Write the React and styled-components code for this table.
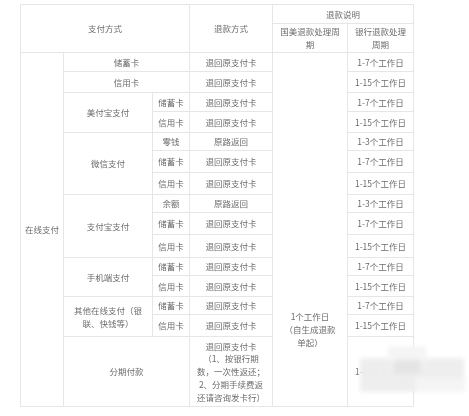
import React from "react";
import styled, { createGlobalStyle } from "styled-components";

const GlobalStyle = createGlobalStyle`
  html, body {
    margin: 0;
    background: #fff;
  }
  body {
    font-family: "Noto Sans CJK SC", "Noto Sans", sans-serif;
  }
`;

const Page = styled.div`
  position: relative;
  width: 469px;
  height: 416px;
  padding: 4px 0 0 20px;
  box-sizing: border-box;
  overflow: hidden;
`;

const Table = styled.table`
  border-collapse: collapse;
  table-layout: fixed;
  width: 393px;
  color: #6c6c6c;
  font-size: 8.5px;
  line-height: 12.8px;
  filter: blur(0.3px);
`;

const Row = styled.tr`
  height: ${(p) => p.$h}px;
`;

const Th = styled.th`
  font-weight: normal;
  border: 1px solid #e6e6e6;
  padding: 0 3px;
  text-align: center;
  vertical-align: middle;
  white-space: nowrap;
`;

const Td = styled.td`
  border: 1px solid #e6e6e6;
  padding: ${(p) => (p.$top ? `${p.$top}px 3px 0` : "0 3px")};
  text-align: center;
  vertical-align: ${(p) => (p.$top ? "top" : "middle")};
  white-space: nowrap;
`;

const Watermark = styled.div`
  position: absolute;
  left: 356px;
  top: 338px;
  width: 113px;
  height: 64px;
  filter: blur(2px);
  pointer-events: none;
`;

const Patch = styled.div`
  position: absolute;
  left: ${(p) => p.$x}px;
  top: ${(p) => p.$y}px;
  width: ${(p) => p.$w}px;
  height: ${(p) => p.$h}px;
  background: ${(p) => p.$c};
`;

const debit = "储蓄卡";
const credit = "信用卡";
const back = "退回原支付卡";
const d7 = "1-7个工作日";
const d15 = "1-15个工作日";
const d3 = "1-3个工作日";

const groups = [
  { name: "美付宝支付", rows: [[debit, back, d7, 19], [credit, back, d15, 21]] },
  {
    name: "微信支付",
    rows: [["零钱", "原路返回", d3, 18], [debit, back, d7, 22], [credit, back, d15, 22]],
  },
  {
    name: "支付宝支付",
    rows: [["余额", "原路返回", d3, 18], [debit, back, d7, 22], [credit, back, d15, 23]],
  },
  { name: "手机端支付", rows: [[debit, back, d7, 18], [credit, back, d15, 21]] },
  {
    name: (
      <>
        其他在线支付（银
        <br />
        联、快钱等）
      </>
    ),
    rows: [[debit, back, d7, 18], [credit, back, d15, 22]],
  },
];

export default function App() {
  return (
    <Page>
      <GlobalStyle />
      <Table>
        <colgroup>
          <col style={{ width: 43 }} />
          <col style={{ width: 89 }} />
          <col style={{ width: 37 }} />
          <col style={{ width: 83 }} />
          <col style={{ width: 75 }} />
          <col style={{ width: 66 }} />
        </colgroup>
        <thead>
          <Row $h={19}>
            <Th colSpan={3} rowSpan={2}>支付方式</Th>
            <Th rowSpan={2}>退款方式</Th>
            <Th colSpan={2}>退款说明</Th>
          </Row>
          <Row $h={29}>
            <Th>
              国美退款处理周
              <br />期
            </Th>
            <Th>
              银行退款处理
              <br />周期
            </Th>
          </Row>
        </thead>
        <tbody>
          <Row $h={19}>
            <Td rowSpan={15}>在线支付</Td>
            <Td colSpan={2}>{debit}</Td>
            <Td>{back}</Td>
            <Td rowSpan={15} $top={257}>
              1个工作日
              <br />
              （自生成退款
              <br />
              单起）
            </Td>
            <Td>{d7}</Td>
          </Row>
          <Row $h={21}>
            <Td colSpan={2}>{credit}</Td>
            <Td>{back}</Td>
            <Td>{d15}</Td>
          </Row>
          {groups.map((g, gi) =>
            g.rows.map(([card, way, days, h], ri) => (
              <Row $h={h} key={`${gi}-${ri}`}>
                {ri === 0 && <Td rowSpan={g.rows.length}>{g.name}</Td>}
                <Td>{card}</Td>
                <Td>{way}</Td>
                <Td>{days}</Td>
              </Row>
            ))
          )}
          <Row $h={70}>
            <Td colSpan={2}>分期付款</Td>
            <Td>
              退回原支付卡
              <br />
              （1、按银行期
              <br />
              数，一次性返还；
              <br />
              2、分期手续费返
              <br />
              还请咨询发卡行）
            </Td>
            <Td>{d15}</Td>
          </Row>
        </tbody>
      </Table>
      <Watermark>
        <Patch $x={4} $y={20} $w={104} $h={34} $c="rgba(238,238,238,0.98)" />
        <Patch $x={32} $y={8} $w={38} $h={16} $c="rgba(244,244,244,0.95)" />
        <Patch $x={38} $y={22} $w={26} $h={14} $c="rgba(228,228,228,0.9)" />
        <Patch $x={60} $y={40} $w={50} $h={14} $c="rgba(246,246,246,0.95)" />
      </Watermark>
    </Page>
  );
}
